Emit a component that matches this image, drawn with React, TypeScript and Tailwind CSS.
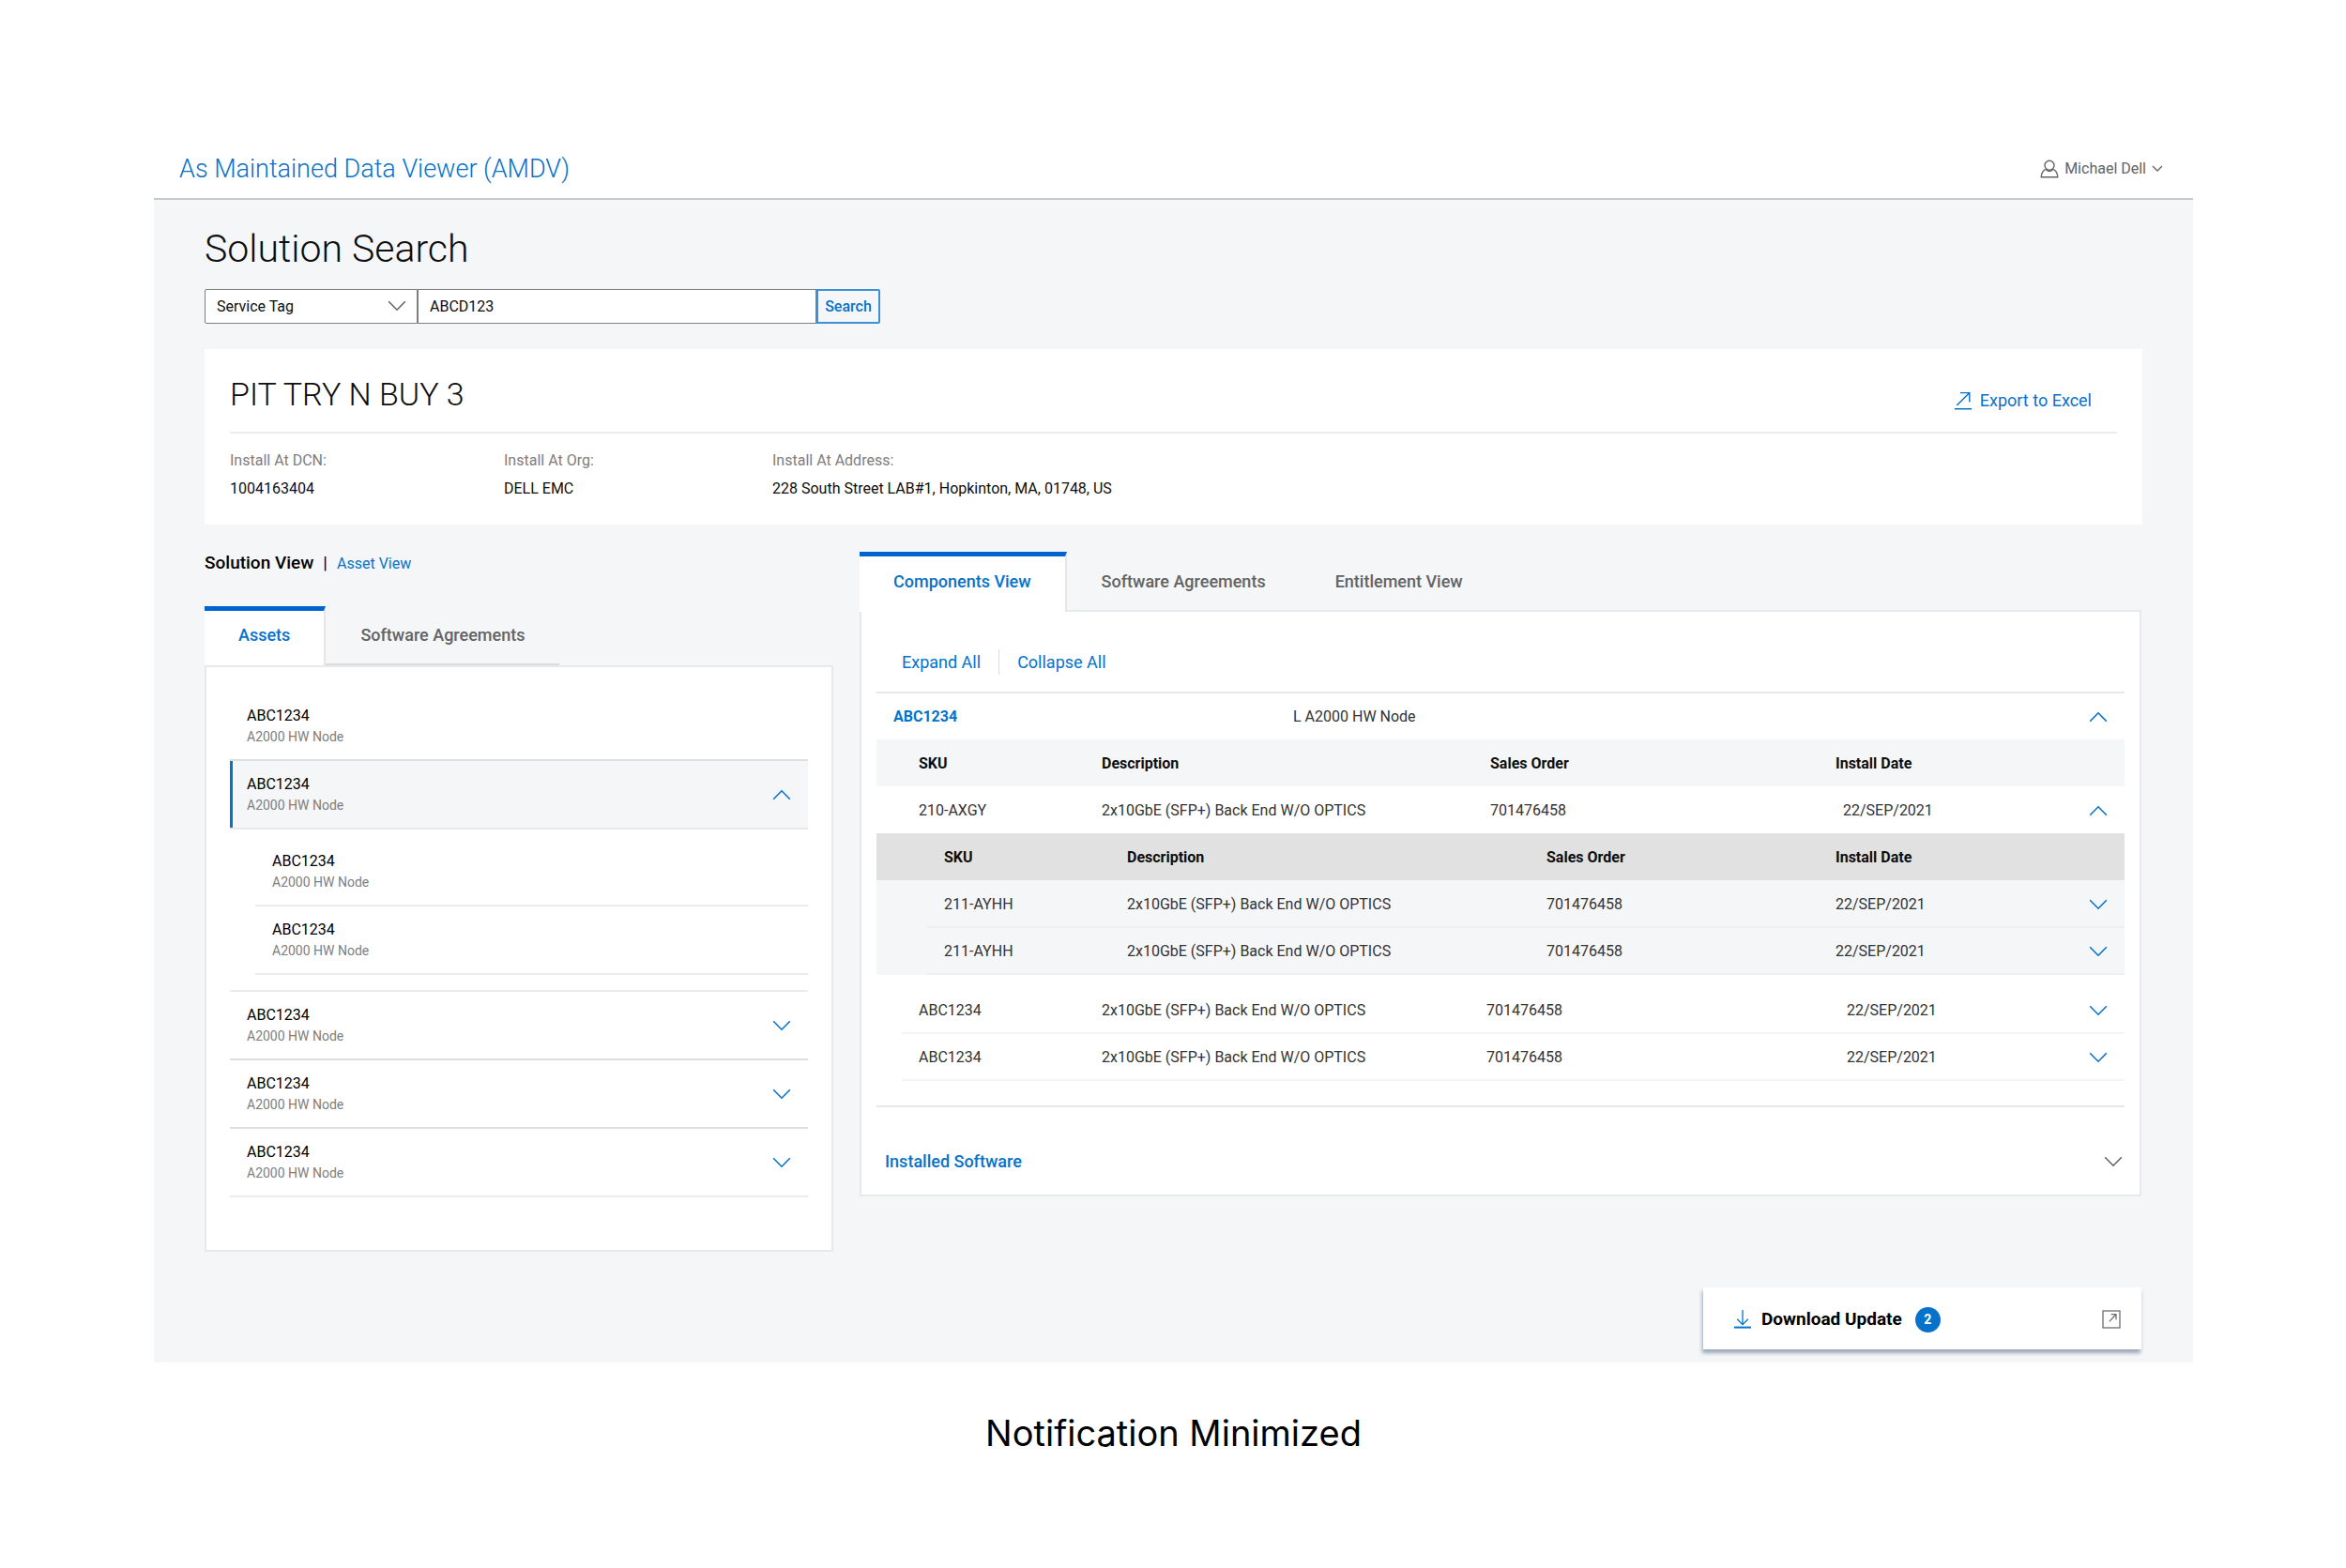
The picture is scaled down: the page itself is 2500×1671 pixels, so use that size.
import type { ReactNode } from 'react'
import clsx from 'clsx'

type Part = {
  sku: string
  description: string
  order: string
  date: string
}

const OPTICS = '2x10GbE (SFP+) Back End W/O OPTICS'

const nestedParts: Part[] = [
  { sku: '211-AYHH', description: OPTICS, order: '701476458', date: '22/SEP/2021' },
  { sku: '211-AYHH', description: OPTICS, order: '701476458', date: '22/SEP/2021' },
]

const otherParts: Part[] = [
  { sku: 'ABC1234', description: OPTICS, order: '701476458', date: '22/SEP/2021' },
  { sku: 'ABC1234', description: OPTICS, order: '701476458', date: '22/SEP/2021' },
]

function Chevron({ up = false, className = '' }: { up?: boolean; className?: string }) {
  return (
    <svg viewBox="0 0 20 12" className={clsx('h-3 w-5 shrink-0', className)} fill="none" stroke="currentColor" strokeWidth="1.6" aria-hidden="true">
      <path d={up ? 'M1.2 10.8 10 1.8l8.8 9' : 'M1.2 1.2l8.8 9 8.8-9'} />
    </svg>
  )
}

function UserIcon() {
  return (
    <svg viewBox="0 0 20 20" className="size-5" fill="none" stroke="currentColor" strokeWidth="1.4" aria-hidden="true">
      <circle cx="10" cy="6.2" r="5" />
      <path d="M6.8 10.2C3.6 11.3 1.5 14 1.2 18.7h17.6c-.3-4.7-2.4-7.4-5.6-8.5" />
      <path d="M6.6 11.2c2 1.5 4.8 1.5 6.8 0" />
    </svg>
  )
}

function ExportIcon() {
  return (
    <svg viewBox="0 0 20 20" className="size-5" fill="none" stroke="currentColor" strokeWidth="1.4" aria-hidden="true">
      <path d="M3.2 15 16.6 1.8M7 1.6h9.8v9.8M1 18.8h18" />
    </svg>
  )
}

function DownloadIcon() {
  return (
    <svg viewBox="0 0 20 20" className="size-5 text-[#0672cb]" fill="none" stroke="currentColor" strokeWidth="1.3" aria-hidden="true">
      <path d="M10 0v15.4M4.2 9.8l5.8 5.8 5.8-5.8" />
      <path d="M1 18.6h18" strokeWidth="2" />
    </svg>
  )
}

function PopOutIcon() {
  return (
    <svg viewBox="0 0 20 20" className="size-5 text-[#6e6e6e]" fill="none" stroke="currentColor" strokeWidth="1.3" aria-hidden="true">
      <rect x="1" y="1" width="18" height="18" />
      <path d="M7.8 12.4l7-7.6M9.6 4.6h5.4v5.6" />
    </svg>
  )
}

function Tab({ active = false, underline = false, children }: { active?: boolean; underline?: boolean; children: ReactNode }) {
  return (
    <button
      type="button"
      role="tab"
      aria-selected={active}
      className={clsx(
        'border-t-[5px] text-lg font-medium whitespace-nowrap',
        active
          ? 'border-r-2 border-t-[#0063cf] border-r-[#e6e6e6] bg-white px-9 pb-1.5 text-[#0672cb]'
          : 'border-t-transparent px-[37px] pb-1 text-[#636363]',
        active && !underline && 'relative -mb-px',
        !active && underline && 'border-b-2 border-b-[#dcdcdc]',
      )}
    >
      {children}
    </button>
  )
}

function AssetRow({ chevron, selected = false, lineClass = 'border-[#ebebeb]' }: { chevron?: 'up' | 'down'; selected?: boolean; lineClass?: string }) {
  return (
    <div className={clsx('flex h-[73px] items-start justify-between border-b-2 px-[18px] pt-3.5', lineClass, selected && 'bg-[#f5f6f8] shadow-[inset_3px_0_0_#0672cb]')}>
      <div>
        <p className="text-base leading-[22px] text-black">ABC1234</p>
        <p className="text-sm leading-[22px] text-[#7e7e7e]">A2000 HW Node</p>
      </div>
      {chevron && (
        <button type="button" aria-label={chevron === 'up' ? 'Collapse asset' : 'Expand asset'} className="self-center pb-3.5 text-[#0672cb]">
          <Chevron up={chevron === 'up'} />
        </button>
      )}
    </div>
  )
}

function ToggleCell({ up = false }: { up?: boolean }) {
  return (
    <td className="pr-[18px]">
      <button type="button" aria-label={up ? 'Collapse row' : 'Expand row'} className="ml-auto block text-[#0672cb]">
        <Chevron up={up} />
      </button>
    </td>
  )
}

function AssetsPanel() {
  return (
    <section>
      <div className="flex items-baseline gap-2.5 text-[19px] leading-6 text-black">
        <span className="font-medium">Solution View</span>
        <span>|</span>
        <a href="#assets" className="text-base leading-6 text-[#0672cb]">
          Asset View
        </a>
      </div>
      <div role="tablist" className="mt-[33px] flex h-[63px]">
        <Tab active underline>
          Assets
        </Tab>
        <Tab underline>Software Agreements</Tab>
      </div>
      <div className="border-2 border-[#e8e9ea] bg-white px-[25px] pt-[27px] pb-14">
        <AssetRow lineClass="border-[#dedede]" />
        <AssetRow chevron="up" selected lineClass="border-[#e8e8e8]" />
        <div className="border-b-2 border-[#ebebeb] pt-[9px] pb-4 pl-[27px]">
          <AssetRow />
          <AssetRow />
        </div>
        <AssetRow chevron="down" lineClass="border-[#dedede]" />
        <AssetRow chevron="down" lineClass="border-[#dedede]" />
        <AssetRow chevron="down" />
      </div>
    </section>
  )
}

function ComponentsPanel() {
  return (
    <section>
      <div role="tablist" className="flex h-[63px]">
        <Tab active>Components View</Tab>
        <Tab>Software Agreements</Tab>
        <Tab>Entitlement View</Tab>
      </div>
      <div className="-mt-px border-2 border-[#e8e9ea] bg-white px-4 pt-10 pb-[21px] text-base text-[#333]">
        <div className="flex h-[27px] items-center gap-[19px] pl-[27px] text-lg text-[#0672cb]">
          <button type="button">Expand All</button>
          <span className="h-full w-px bg-[#dcdcdc]" />
          <button type="button">Collapse All</button>
        </div>

        <div className="mt-[18px] flex h-[51px] items-center border-t-2 border-[#e8e8e8] px-[18px]">
          <span className="w-[426px] font-bold text-[#0672cb]">ABC1234</span>
          <span className="flex-1">L A2000 HW Node</span>
          <button type="button" aria-label="Collapse component" className="text-[#0672cb]">
            <Chevron up />
          </button>
        </div>

        <table className="w-full table-fixed text-left [&_td]:pt-0.5 [&_th]:pt-0.5">
          <colgroup>
            <col className="w-[240px]" />
            <col />
            <col className="w-[368px]" />
            <col className="w-[218px]" />
            <col className="w-[90px]" />
          </colgroup>
          <thead className="bg-[#f5f6f8] text-[#0e0e0e]">
            <tr className="h-[50px]">
              <th className="pl-[45px]">SKU</th>
              <th>Description</th>
              <th>Sales Order</th>
              <th>Install Date</th>
              <th></th>
            </tr>
          </thead>
          <tbody>
            <tr className="h-[50px]">
              <td className="pl-[45px]">210-AXGY</td>
              <td>{OPTICS}</td>
              <td>701476458</td>
              <td className="pl-2">22/SEP/2021</td>
              <ToggleCell up />
            </tr>
          </tbody>
        </table>

        <table className="w-full table-fixed bg-[#f5f6f8] text-left [&_td]:pt-0.5 [&_th]:pt-0.5">
          <colgroup>
            <col className="w-[54px]" />
            <col className="w-[213px]" />
            <col />
            <col className="w-[308px]" />
            <col className="w-[218px]" />
            <col className="w-[90px]" />
          </colgroup>
          <thead className="bg-[#e1e1e1] text-[#0e0e0e]">
            <tr className="h-[50px]">
              <th></th>
              <th className="pl-[18px]">SKU</th>
              <th>Description</th>
              <th>Sales Order</th>
              <th>Install Date</th>
              <th></th>
            </tr>
          </thead>
          <tbody>
            {nestedParts.map((part, i) => (
              <tr key={i} className="h-[50px] [&>td+td]:border-b-2 [&>td+td]:border-[#eeeff0]">
                <td></td>
                <td className="pl-[18px]">{part.sku}</td>
                <td>{part.description}</td>
                <td>{part.order}</td>
                <td>{part.date}</td>
                <ToggleCell />
              </tr>
            ))}
          </tbody>
        </table>

        <div className="mt-3 pl-[27px]">
          <table className="w-full table-fixed text-left [&_td]:pt-0.5">
            <colgroup>
              <col className="w-[213px]" />
              <col />
              <col className="w-[384px]" />
              <col className="w-[206px]" />
              <col className="w-[90px]" />
            </colgroup>
            <tbody>
              {otherParts.map((part, i) => (
                <tr key={i} className="h-[50px] border-b-2 border-[#f3f4f5]">
                  <td className="pl-[18px]">{part.sku}</td>
                  <td>{part.description}</td>
                  <td>{part.order}</td>
                  <td>{part.date}</td>
                  <ToggleCell />
                </tr>
              ))}
            </tbody>
          </table>
        </div>

        <div className="mt-[26px] flex items-center justify-between border-t-2 border-[#e8e8e8] pt-11 pr-0.5 pl-[9px]">
          <h3 className="text-lg font-medium text-[#0672cb]">Installed Software</h3>
          <button type="button" aria-label="Expand installed software" className="text-[#636363]">
            <Chevron />
          </button>
        </div>
      </div>
    </section>
  )
}

export default function App() {
  return (
    <div className="min-h-screen bg-white pt-[147px] pr-[163px] pb-24 pl-[164px] font-[Roboto,sans-serif]">
      <header className="flex h-[66px] items-center justify-between border-b-2 border-[#c8c9ca] pt-0.5 pr-8 pl-[27px]">
        <span className="text-[27px] leading-9 font-light text-[#0672cb]">As Maintained Data Viewer (AMDV)</span>
        <button type="button" className="flex items-center gap-1.5 text-base text-[#636363]">
          <UserIcon />
          Michael Dell
          <svg viewBox="0 0 12 8" className="h-2 w-3" fill="none" stroke="currentColor" strokeWidth="1.3" aria-hidden="true">
            <path d="M1 1l5 5 5-5" />
          </svg>
        </button>
      </header>

      <main className="bg-[#f5f6f8] px-[54px] pt-7 pb-3.5">
        <h1 className="text-[41px] leading-[48px] font-light text-[#0e0e0e]">Solution Search</h1>

        <form className="mt-[19px] flex h-[37px] text-base text-[#0e0e0e]" onSubmit={(e) => e.preventDefault()}>
          <div className="relative">
            <select aria-label="Search by" className="h-full w-[227px] appearance-none rounded-l-xs border border-[#7e7e7e] bg-white pr-10 pl-3" defaultValue="tag">
              <option value="tag">Service Tag</option>
              <option value="order">Sales Order</option>
            </select>
            <Chevron className="pointer-events-none absolute top-3 right-3 text-[#636363]" />
          </div>
          <input type="text" aria-label="Search value" defaultValue="ABCD123" className="w-[425px] border border-[#7e7e7e] bg-white px-3" />
          <button type="submit" className="w-[68px] rounded-r-xs border-2 border-[#3d8fd6] font-medium text-[#0672cb]">
            Search
          </button>
        </form>

        <section className="mt-[27px] bg-white px-[27px] pt-[27px] pb-[26px]">
          <div className="flex items-end justify-between border-b-2 border-[#ebebeb] pr-[27px] pb-[19px]">
            <h2 className="text-[34px] leading-[42px] font-light text-[#0e0e0e]">PIT TRY N BUY 3</h2>
            <a href="#export" className="flex items-center gap-2 text-lg text-[#0672cb]">
              <ExportIcon />
              Export to Excel
            </a>
          </div>
          <dl className="grid grid-cols-[292px_286px_1fr] pt-[17px] text-base leading-6">
            <div>
              <dt className="text-[#7e7e7e]">Install At DCN:</dt>
              <dd className="mt-1.5 text-[#0e0e0e]">1004163404</dd>
            </div>
            <div>
              <dt className="text-[#7e7e7e]">Install At Org:</dt>
              <dd className="mt-1.5 text-[#0e0e0e]">DELL EMC</dd>
            </div>
            <div>
              <dt className="text-[#7e7e7e]">Install At Address:</dt>
              <dd className="mt-1.5 text-[#0e0e0e]">228 South Street LAB#1, Hopkinton, MA, 01748, US</dd>
            </div>
          </dl>
        </section>

        <div className="mt-[29px] grid grid-cols-[670fr_1366fr] items-start gap-7 pr-px">
          <AssetsPanel />
          <ComponentsPanel />
        </div>

        <div className="mt-[38px] flex justify-end pr-px">
          <aside className="flex h-[66px] w-[467px] items-center bg-white pt-0.5 pr-[22px] pl-8 shadow-[-1px_4px_4px_#9aa7b8]">
            <DownloadIcon />
            <span className="ml-2.5 text-[19px] font-bold text-black">Download Update</span>
            <span className="ml-3.5 flex size-[27px] items-center justify-center rounded-full bg-[#0672cb] text-sm font-bold text-white">2</span>
            <button type="button" aria-label="Open downloads" className="ml-auto">
              <PopOutIcon />
            </button>
          </aside>
        </div>
      </main>

      <p className="mt-[51px] text-center font-[Inter,sans-serif] text-[38px] leading-[48px] text-black">Notification Minimized</p>
    </div>
  )
}
